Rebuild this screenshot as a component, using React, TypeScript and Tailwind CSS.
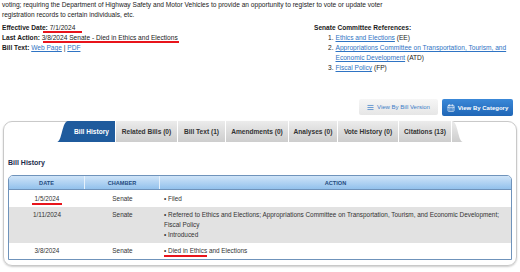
import { AlignJustify, CalendarDays } from "lucide-react";

const tabs = [
  { label: "Bill History", w: "w-[48px]" },
  { label: "Related Bills (0)", w: "w-[62px]" },
  { label: "Bill Text (1)", w: "w-[48px]" },
  { label: "Amendments (0)", w: "w-[63px]" },
  { label: "Analyses (0)", w: "w-[49px]" },
  { label: "Vote History (0)", w: "w-[61px]" },
  { label: "Citations (13)", w: "w-[53px]" },
];

function Mark({ className }: { className: string }) {
  return <span className={"absolute h-[2px] bg-[#e8141b] " + className} />;
}

function Swoosh({ side, fill }: { side: "left" | "right"; fill: string }) {
  const d = side === "left" ? "M11 0 C5 0 5 21 0 21 L11 21 Z" : "M0 0 C6 0 6 21 11 21 L0 21 Z";
  return (
    <svg width="11" height="21" viewBox="0 0 11 21" className="block shrink-0">
      {side === "left" ? (
        <path d={d} fill={fill} />
      ) : (
        <>
          <defs>
            <linearGradient id="tg" x1="0" y1="0" x2="0" y2="1">
              <stop offset="0" stopColor="#ececec" />
              <stop offset="1" stopColor="#cdcdcd" />
            </linearGradient>
          </defs>
          <path d={d} fill="url(#tg)" />
        </>
      )}
    </svg>
  );
}

export default function App() {
  return (
    <div className="w-[520px] h-[272px] overflow-hidden bg-white text-[#1a1a1a] text-[6.6px] leading-[10px] font-['Liberation_Sans',Arial,sans-serif]">
      <p className="px-[2px]">
        voting; requiring the Department of Highway Safety and Motor Vehicles to provide an opportunity to register to vote or update voter
        <br />
        registration records to certain individuals, etc.
      </p>

      <div className="flex mt-[3px] px-[2px]">
        <div className="w-[312px]">
          <div className="relative">
            <b>Effective Date:</b> 7/1/2024
            <Mark className="left-[41px] w-[39px] top-[8px]" />
          </div>
          <div className="relative">
            <b>Last Action:</b> 3/8/2024 Senate - Died in Ethics and Elections
            <Mark className="left-[41px] w-[136px] top-[8px]" />
          </div>
          <div>
            <b>Bill Text:</b> <span className="text-[#2f74c4] underline">Web Page</span> | <span className="text-[#2f74c4] underline">PDF</span>
          </div>
        </div>
        <div>
          <b>Senate Committee References:</b>
          <ol className="pl-[14px]">
            <li className="flex gap-[2px]">
              <span>1.</span>
              <span><span className="text-[#2f74c4] underline">Ethics and Elections</span> (EE)</span>
            </li>
            <li className="flex gap-[2px] w-[180px]">
              <span>2.</span>
              <span>
                <span className="text-[#2f74c4] underline">Appropriations Committee on Transportation, Tourism, and</span>
                <br />
                <span className="text-[#2f74c4] underline">Economic Development</span> (ATD)
              </span>
            </li>
            <li className="flex gap-[2px]">
              <span>3.</span>
              <span><span className="text-[#2f74c4] underline">Fiscal Policy</span> (FP)</span>
            </li>
          </ol>
        </div>
      </div>

      <div className="flex justify-end gap-[4px] pr-[7px] mt-[26px]">
        <div className="h-[16px] w-[79px] flex items-center justify-center gap-[3px] bg-gradient-to-b from-[#f6f6f6] to-[#e6e6e6] text-[#3c7dc8] text-[6px] rounded-[2px]">
          <AlignJustify size={7} strokeWidth={2.5} />
          View By Bill Version
        </div>
        <div className="h-[17px] w-[71px] flex items-center justify-center gap-[3px] bg-gradient-to-b from-[#3a88d8] to-[#1f66b6] text-white font-bold text-[6px] rounded-[2px]">
          <CalendarDays size={8} strokeWidth={2} />
          View By Category
        </div>
      </div>

      <div className="mx-[3px] mt-[5px] h-[145px] border border-[#c9c9c9] rounded-[9px] shadow-[0_1px_2px_rgba(0,0,0,0.2)]">
        <div className="flex justify-center -mt-px">
          <Swoosh side="left" fill="#1f5b9d" />
          {tabs.map((t, i) => (
            <div
              key={t.label}
              className={
                "h-[21px] flex items-center justify-center font-bold text-[6.6px] border-r border-white " +
                t.w +
                (i === 0
                  ? " bg-[#1f5b9d] text-white"
                  : " bg-gradient-to-b from-[#ececec] to-[#cdcdcd] text-[#333]")
              }
            >
              {t.label}
            </div>
          ))}
          <Swoosh side="right" fill="#d6d6d6" />
        </div>

        <div className="px-[4px]">
          <h3 className="mt-[16px] font-bold text-[7px] text-[#1c2c4c]">Bill History</h3>
          <div className="mt-[7px] border border-[#6f93bb] rounded-t-[5px] overflow-hidden text-[6.4px]">
            <div className="flex h-[14px] items-center bg-gradient-to-b from-[#cfe4f8] to-[#92c1ec] text-[#234a80] font-bold text-[5.6px] border-b border-[#6f93bb]">
              <div className="w-[76px] h-full flex items-center justify-center border-r border-[#e6f1fb]">DATE</div>
              <div className="w-[75px] h-full flex items-center justify-center border-r border-[#e6f1fb]">CHAMBER</div>
              <div className="flex-1 text-center">ACTION</div>
            </div>
            <div className="flex h-[17px] items-center bg-white text-[#333]">
              <div className="w-[76px] text-center">
                <span className="relative">
                  1/5/2024
                  <Mark className="-left-[3px] -right-[3px] top-[8px]" />
                </span>
              </div>
              <div className="w-[75px] text-center">Senate</div>
              <div className="flex-1 pl-[4px]">• Filed</div>
            </div>
            <div className="flex h-[36px] pt-[3px] bg-[#e2e2e2] text-[#333]">
              <div className="w-[76px] text-center">1/11/2024</div>
              <div className="w-[75px] text-center">Senate</div>
              <div className="flex-1 pl-[4px]">
                • Referred to Ethics and Elections; Appropriations Committee on Transportation, Tourism, and Economic Development;
                <br />
                Fiscal Policy
                <br />• Introduced
              </div>
            </div>
            <div className="flex h-[16px] items-center bg-white text-[#333]">
              <div className="w-[76px] text-center">3/8/2024</div>
              <div className="w-[75px] text-center">Senate</div>
              <div className="flex-1 pl-[4px]">
                <span className="relative">
                  • Died in Ethics
                  <Mark className="left-0 right-0 top-[8px]" />
                </span>{" "}
                and Elections
              </div>
            </div>
          </div>
        </div>
      </div>
    </div>
  );
}
